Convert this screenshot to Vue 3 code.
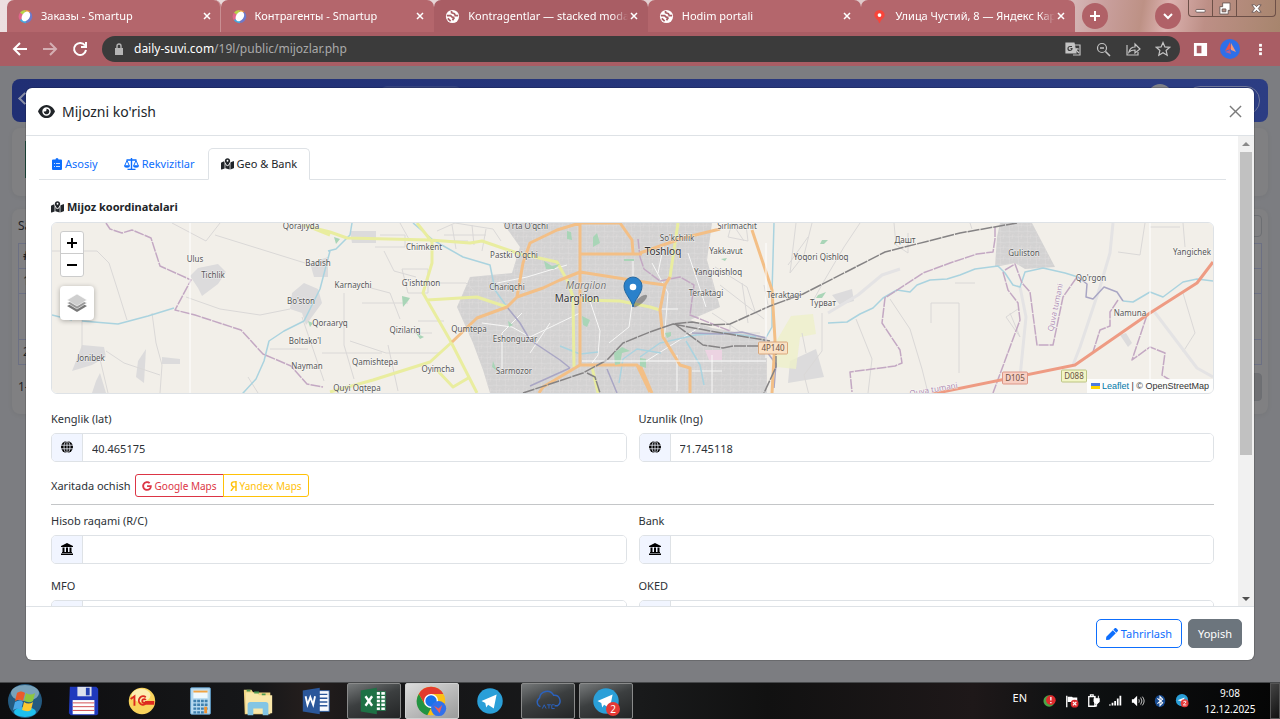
<template>
  <div class="desktop">
    <header class="browser">
      <div class="tab-strip">
        <div class="tabs">
          <div v-for="tab in tabs" :key="tab.title" class="tab" :class="{ current: tab.current }">
            <svg v-if="tab.icon === 'smartup'" class="favicon" viewBox="0 0 16 16">
              <path d="M8 1a7 7 0 0 1 5 2L8 8z" fill="#f3a43c" />
              <path d="M8 1a7 7 0 0 0-6 3l6 4z" fill="#b9d348" />
              <path d="M2 4a7 7 0 0 0 0 8l6-4z" fill="#e2658b" />
              <path d="M2 12a7 7 0 0 0 7 3L8 8z" fill="#45a6dd" />
              <path d="M13 3a7 7 0 0 1-4 12L8 8z" fill="#6e79c9" />
              <ellipse cx="8.3" cy="7.7" rx="4" ry="5.6" fill="#fff" transform="rotate(35 8 8)" />
            </svg>
            <svg v-else-if="tab.icon === 'globe'" class="favicon" viewBox="0 0 16 16">
              <circle cx="8" cy="8" r="7" fill="#fff" />
              <path d="M2 7h4l2 2h2M7 2v2l3 1 1 2h3M8 12l2-3M3 10l3 3" fill="none" stroke="#a95d64" stroke-width="1.800" />
            </svg>
            <svg v-else class="favicon" viewBox="0 0 16 16">
              <path d="M8 1a5.500 5.500 0 0 0-5.500 5.500C2.500 10 7 11 7.500 15h1C9 11 13.500 10 13.500 6.500A5.500 5.500 0 0 0 8 1z" fill="#f8443a" />
              <circle cx="8" cy="6.500" r="2" fill="#fff" />
            </svg>
            <span class="tab-title">{{ tab.title }}</span>
            <button class="tab-close" aria-label="Close tab">
              <svg viewBox="0 0 8 8"><path d="M1 1l6 6M7 1L1 7" /></svg>
            </button>
          </div>
        </div>
        <button class="round-btn new-tab" aria-label="New tab">
          <svg viewBox="0 0 12 12"><path d="M6 1v10M1 6h10" /></svg>
        </button>
        <button class="round-btn tab-search" aria-label="Search tabs">
          <svg viewBox="0 0 12 12"><path d="M2 4l4 4 4-4" /></svg>
        </button>
        <div class="window-controls">
          <button aria-label="Minimize"><svg viewBox="0 0 14 14"><rect x="2" y="8" width="10" height="3" rx="1" /></svg></button>
          <button aria-label="Restore">
            <svg viewBox="0 0 14 14"><path d="M5 1h8v8h-2v4H2V5h3zM4.500 7.500v3h4v-3z" fill-rule="evenodd" /></svg>
          </button>
          <button class="wide" aria-label="Close"><svg viewBox="0 0 14 14"><path d="M2 3h3l2 2 2-2h3L9 7l3 4H9L7 9l-2 2H2l3-4z" /></svg></button>
        </div>
      </div>

      <div class="toolbar">
        <button class="nav-btn" aria-label="Back"><svg viewBox="0 0 16 16"><path d="M15 8H2M8 2L2 8l6 6" /></svg></button>
        <button class="nav-btn faded" aria-label="Forward"><svg viewBox="0 0 16 16"><path d="M1 8h13M8 2l6 6-6 6" /></svg></button>
        <button class="nav-btn" aria-label="Reload">
          <svg viewBox="0 0 16 16"><path d="M13 4.500A6 6 0 1 0 14 9M14 1v5H9" /></svg>
        </button>
        <div class="omnibox">
          <svg class="lock" viewBox="0 0 10 12"><path d="M1 5h8v7H1z" fill="#b5b5b5" /><path d="M3 5V3a2 2 0 0 1 4 0v2" fill="none" stroke="#b5b5b5" stroke-width="1.400" /></svg>
          <span class="url"><b>daily-suvi.com</b>/19l/public/mijozlar.php</span>
          <button aria-label="Translate">
            <svg viewBox="0 0 16 16"><path d="M1 2h8l2 10H1z" fill="#c4c4c4" /><path d="M9 4h6v10H8" /><path d="M10 8h4M12 7c0 2-1 3-2 4M11 9l3 3" /><path d="M7 5.500H5a2 2 0 1 0 2 2H5.500" stroke="#3b3b3b" /></svg>
          </button>
          <button aria-label="Zoom"><svg viewBox="0 0 16 16"><circle cx="7" cy="7" r="4.500" /><path d="M10.500 10.500L15 15M5 7h4" stroke-width="1.600" /></svg></button>
          <button aria-label="Share"><svg viewBox="0 0 16 16"><path d="M2 4v10h11v-3M4 11c1-4 3-5 6-5V3l5 5-5 4V9c-3 0-4 0-6 2z" /></svg></button>
          <button aria-label="Bookmark"><svg viewBox="0 0 16 16"><path d="M8 1.500l1.900 4.400 4.800.4-3.600 3.200 1.100 4.700L8 11.700l-4.200 2.500 1.100-4.700L1.300 6.300l4.800-.4z" /></svg></button>
        </div>
        <button class="chrome-btn" aria-label="Side panel">
          <svg viewBox="0 0 16 16"><path d="M1 1h14v14H1zM4 4v8h5V4z" fill="#fff" fill-rule="evenodd" /></svg>
        </button>
        <button class="chrome-btn profile" aria-label="Profile">
          <svg viewBox="0 0 20 20"><circle cx="10" cy="10" r="10" fill="#2f6fe8" /><path d="M10 3l1 7-6 2z" fill="#e8524e" /><path d="M11 4l5 9-5-2z" fill="#f39b7c" /><path d="M5 13l5-2 1 4z" fill="#b85f8e" /></svg>
        </button>
        <button class="chrome-btn" aria-label="Menu">
          <svg viewBox="0 0 16 16" fill="#fff"><rect x="6.500" y="2" width="3" height="3" /><rect x="6.500" y="6.500" width="3" height="3" /><rect x="6.500" y="11" width="3" height="3" /></svg>
        </button>
      </div>
    </header>

    <main class="viewport">
      <div class="page" aria-hidden="true">
        <div class="navbar">
          <span class="nav-back"></span>
          <span class="nav-search"></span>
          <span class="nav-avatar"></span>
          <span class="nav-pill"></span>
        </div>
        <div class="page-card filter-card"><span class="filter-edge"></span></div>
        <div class="page-card table-card">
          <div class="table-top"><span>Sa</span><span class="ghost-box"></span></div>
          <table class="client-table">
            <thead><tr><th>#</th></tr></thead>
            <tbody>
              <tr><td>1</td></tr>
              <tr class="tall"><td></td></tr>
              <tr><td>2</td></tr>
            </tbody>
          </table>
          <div class="table-bottom"><span>1-</span><span class="ghost-box filled"></span></div>
        </div>
      </div>

      <section class="modal" role="dialog" aria-labelledby="modal-title">
        <div class="modal-header">
          <svg class="title-icon" viewBox="0 0 576 512"><path :d="icons.eye" /></svg>
          <h1 id="modal-title">Mijozni ko'rish</h1>
          <button class="modal-close" aria-label="Close"><svg viewBox="0 0 14 14"><path d="M1 1l12 12M13 1L1 13" /></svg></button>
        </div>

        <div class="modal-middle">
          <div class="modal-body">
            <nav class="nav-tabs">
              <a href="#asosiy">
                <svg class="clip-icon" viewBox="0 0 10 12"><path d="M1 1.500h2.500a1.500 1.500 0 0 1 3 0H9a1 1 0 0 1 1 1V11a1 1 0 0 1-1 1H1a1 1 0 0 1-1-1V2.500a1 1 0 0 1 1-1z" /><path d="M2 5.500h1M4 5.500h4M2 8.500h1M4 8.500h4" stroke="#fff" stroke-width=".8" /></svg>
                Asosiy
              </a>
              <a href="#rekvizitlar">
                <svg class="scale-icon" viewBox="0 0 15 12">
                  <path d="M7.500 0v11M2.500 2h10M3.500 11.500h8" fill="none" stroke="currentColor" stroke-width="1.400" />
                  <path d="M3 2.500L.8 7.500M3 2.500l2.200 5M12 2.500L9.800 7.500M12 2.500l2.200 5" fill="none" stroke="currentColor" />
                  <path d="M0 7.200h6a3 2.500 0 0 1-6 0zM9 7.200h6a3 2.500 0 0 1-6 0z" />
                </svg>
                Rekvizitlar
              </a>
              <a href="#geo" class="active">
                <svg class="map-icon" viewBox="0 0 576 512"><path :d="icons.map" /></svg>
                Geo &amp; Bank
              </a>
            </nav>

            <div class="tab-content">
              <h2>
                <svg class="map-icon" viewBox="0 0 576 512"><path :d="icons.map" /></svg>
                Mijoz koordinatalari
              </h2>

              <div class="map">
                <svg class="map-canvas" viewBox="0 0 1161 170" preserveAspectRatio="xMidYMid slice">
                  <defs>
                    <pattern id="streets" width="9" height="11" patternUnits="userSpaceOnUse">
                      <path d="M0 3l9-1M3 0l1 11M0 8l9 1M7 0l-1 5" fill="none" stroke="#dedddd" stroke-width=".5" />
                    </pattern>
                  </defs>
                  <rect width="1161" height="170" fill="#f2efe9" />
                  <g v-for="area in areas" :key="area">
                    <path :d="area" fill="#d3d2d2" />
                    <path :d="area" fill="url(#streets)" />
                  </g>
                  <path v-for="(p, i) in hamlets" :key="'h' + i" :d="p" fill="#dcdbdc" />
                  <path d="M739 93l22-2 3 20-16 3-4 32-19-2-3-22z" fill="#eef0c9" opacity=".8" />
                  <path d="M653 127h17v10h-13z" fill="#ecd3e2" />
                  <g fill="none" stroke-linejoin="round">
                    <path v-for="(line, i) in lines" :key="i" :d="line.d" :class="line.kind" />
                  </g>
                  <path v-for="(p, i) in parks" :key="'p' + i" :d="p" fill="#a9d5b7" />
                  <path d="M138 0v170M1098 0v170M714 20v115M530 138h184" stroke="#fff" stroke-width="1" />
                  <g class="labels" text-anchor="middle">
                    <text v-for="(l, i) in labels" :key="'l' + i" :x="l[1] - 52" :y="l[2] - 222" :class="l[3]">{{ l[0] }}</text>
                    <text class="district" transform="translate(1006 85) rotate(-78)">Quva tumani</text>
                    <text class="district" transform="translate(882 169) rotate(-10)">Quva tumani</text>
                    <g v-for="s in shields" :key="s.text">
                      <rect :x="s.x - s.w / 2" :y="s.y - 6" :width="s.w" height="12" rx="1" :fill="s.fill" :stroke="s.stroke" />
                      <text :x="s.x" :y="s.y + 3" class="shield">{{ s.text }}</text>
                    </g>
                  </g>
                  <ellipse cx="588" cy="78" rx="9" ry="3" transform="rotate(-40 588 78)" fill="#000" opacity=".3" />
                  <path d="M581 84c-1-7-9-13-9-21a9 9 0 0 1 18 0c0 8-8 14-9 21z" fill="#2a81cb" stroke="#2468a0" />
                  <circle cx="581" cy="64" r="3.300" fill="#fff" />
                </svg>
                <div class="zoom-control">
                  <button aria-label="Zoom in"><svg viewBox="0 0 10 10"><path d="M5 0v10M0 5h10" /></svg></button>
                  <button aria-label="Zoom out"><svg viewBox="0 0 10 10"><path d="M0 5h10" /></svg></button>
                </div>
                <button class="layers-control" aria-label="Layers">
                  <svg viewBox="0 0 20 20">
                    <path d="M0 13l10-5 10 5-10 6z" fill="#777" />
                    <path d="M0 10l10-5 10 5-10 6z" fill="#999" stroke="#fff" stroke-width=".6" />
                    <path d="M0 7l10-6 10 6-10 6z" fill="#cfcfcf" stroke="#fff" stroke-width=".6" />
                  </svg>
                </button>
                <div class="attribution">
                  <svg viewBox="0 0 9 6"><path fill="#4c7be1" d="M0 0h9v3H0z" /><path fill="#ffd500" d="M0 3h9v3H0z" /></svg>
                  <a href="#leaflet">Leaflet</a> | © OpenStreetMap
                </div>
              </div>

              <div class="row">
                <div v-for="f in coords" :key="f.id" class="field">
                  <label :for="f.id">{{ f.label }}</label>
                  <div class="input-group">
                    <span class="addon">
                      <svg viewBox="0 0 12 12">
                        <circle cx="6" cy="6" r="6" />
                        <path d="M0 4.200h12M0 7.800h12M6 0v12" stroke="#f1f5ff" stroke-width=".8" />
                        <ellipse cx="6" cy="6" rx="3" ry="6" fill="none" stroke="#f1f5ff" stroke-width=".8" />
                      </svg>
                    </span>
                    <input :id="f.id" v-model="f.value" type="text" />
                  </div>
                </div>
              </div>

              <div class="open-in">
                <span>Xaritada ochish</span>
                <div class="btn-group">
                  <button class="google"><svg viewBox="0 0 488 512"><path :d="icons.google" /></svg>Google Maps</button>
                  <button class="yandex">
                    <svg viewBox="0 0 8 12"><path d="M7 0v12M7 1H4.500a2.500 2.500 0 0 0 0 6H7M4.500 7L1 12" fill="none" stroke="currentColor" stroke-width="1.700" /></svg>Yandex Maps
                  </button>
                </div>
              </div>

              <hr />

              <div class="row bank-row">
                <div v-for="f in bank" :key="f.id" class="field">
                  <label :for="f.id">{{ f.label }}</label>
                  <div class="input-group">
                    <span class="addon">
                      <svg viewBox="0 0 12 12"><path d="M6 0l6 3v1H0V3zM1.500 4.500h2V9h-2zM5 4.500h2V9H5zM8.500 4.500h2V9h-2zM1 9h10v1H1zM0 10.500h12V12H0z" /></svg>
                    </span>
                    <input :id="f.id" v-model="f.value" type="text" />
                  </div>
                </div>
              </div>
            </div>
          </div>

          <div class="scrollbar">
            <span class="arrow up"></span>
            <div class="track"><div class="thumb"></div></div>
            <span class="arrow down"></span>
          </div>
        </div>

        <div class="modal-footer">
          <button class="btn btn-edit"><svg viewBox="0 0 512 512"><path :d="icons.pen" /></svg>Tahrirlash</button>
          <button class="btn btn-close">Yopish</button>
        </div>
      </section>
    </main>

    <footer class="taskbar">
      <button class="task" aria-label="Start">
        <svg viewBox="0 0 36 36">
          <circle cx="18" cy="18" r="17" fill="#245a80" />
          <ellipse cx="18" cy="10" rx="14" ry="8" fill="#8fb4c8" opacity=".8" />
          <ellipse cx="18" cy="29" rx="11" ry="5" fill="#1fc0ee" />
          <path d="M10 10c3-2 5-2 8 0l-2 8c-3-2-5-1-8 0z" fill="#ea5a2b" />
          <path d="M19 10c3 2 6 2 9 0l-2 8c-3 2-6 1-9 0z" fill="#8cc63f" />
          <path d="M8 19c3-1 5-2 8 0l-2 8c-3-2-5-1-8 0z" fill="#4aa9e9" />
          <path d="M17 19c3 2 6 2 9 0l-2 8c-3 2-6 1-9 0z" fill="#fdc82f" />
        </svg>
      </button>
      <button class="task" aria-label="Total Commander">
        <svg viewBox="0 0 36 36">
          <path d="M3 3h28l2 2v27l-2 1H4l-2-2z" fill="#1f39bd" /><path d="M11 3h15v10H11z" fill="#dce1ec" /><path d="M20 4h4v8h-4z" fill="#2340b0" />
          <path d="M6 17h23v15H6z" fill="#fff" /><path d="M6 20h23M6 24h23M6 28h23" stroke="#d0474b" />
        </svg>
      </button>
      <button class="task" aria-label="1C">
        <svg viewBox="0 0 36 36">
          <circle cx="18" cy="18" r="14" fill="#f9d35c" /><ellipse cx="17" cy="12" rx="10" ry="7" fill="#fdedb0" />
          <path d="M6 16l4-3v10M22 14a4.500 4.500 0 1 0 0 7h9M22 17a2 2 0 1 0 0 2h9" fill="none" stroke="#dd2a1f" stroke-width="2" />
        </svg>
      </button>
      <button class="task" aria-label="Calculator">
        <svg viewBox="0 0 36 36">
          <rect x="8" y="4" width="21" height="28" rx="1" fill="#b7daf0" stroke="#5c9ac6" /><path d="M11 7h15v8H11z" fill="#eef8fd" /><path d="M11 7h15v2H11z" fill="#f0a343" />
          <path d="M11 18h15M11 22h15M11 26h15M11 30h11" stroke="#3f80ae" stroke-width="2.500" stroke-dasharray="3 1" /><path d="M24 24v7" stroke="#ee9130" stroke-width="3" />
        </svg>
      </button>
      <button class="task" aria-label="Explorer">
        <svg viewBox="0 0 36 36">
          <path d="M3 6h8l2 3h18v23H4z" fill="#f0d583" /><path d="M5 9h12l2 3h14v19H5z" fill="#f9e7a9" />
          <path d="M6 7h4M14 9h5M22 11h4" stroke="#4f9a53" stroke-width="2" /><path d="M7 22q0-3 3-3h16q3 0 3 3v11h-6v-7H13v7H7z" fill="#83c5e4" />
        </svg>
      </button>
      <button class="task" aria-label="Word">
        <svg viewBox="0 0 36 36">
          <path d="M17 7h15v22H17z" fill="#f6f9fd" stroke="#2b579a" /><path d="M20 11h10M20 15h10M20 19h10M20 23h10" stroke="#2b579a" stroke-width="1.500" />
          <path d="M4 7l18-3v28L4 29z" fill="#2b579a" /><path d="M7 13l2 9 3-8 3 8 2-9" fill="none" stroke="#fff" stroke-width="2" />
        </svg>
      </button>
      <button class="task open" aria-label="Excel">
        <svg viewBox="0 0 36 36">
          <path d="M18 8h12v20H18z" fill="#fff" stroke="#1e7145" /><path d="M18 12h12M18 16h12M18 20h12M18 24h12M25 8v20" stroke="#1e7145" stroke-width="1.500" />
          <path d="M4 7l17-3v28L4 29z" fill="#1e7145" /><path d="M9 13l7 10M16 13L9 23" stroke="#fff" stroke-width="2.500" />
        </svg>
      </button>
      <button class="task open focused" aria-label="Chrome">
        <svg viewBox="0 0 36 36">
          <circle cx="17" cy="18" r="15" fill="#fbc116" />
          <path d="M4 10.500a15 15 0 0 1 26 0H17l-6.500 11z" fill="#e33b2e" /><path d="M4 10.500L10.500 22 17 25.500 13 33A15 15 0 0 1 4 10.500z" fill="#229342" />
          <circle cx="17" cy="18" r="7.500" fill="#fff" /><circle cx="17" cy="18" r="6" fill="#1a73e8" />
          <circle cx="25" cy="26" r="8" fill="#3270ea" /><path d="M20 23l5 3 4-4-3 9z" fill="#ef5d57" />
        </svg>
      </button>
      <button class="task" aria-label="Telegram">
        <svg viewBox="0 0 36 36"><circle cx="18" cy="18" r="13.500" fill="#2a9fd8" /><path d="M9 18l16-7-3 15-6-4-2 3-1-5z" fill="#fff" /></svg>
      </button>
      <button class="task open" aria-label="ATC">
        <svg viewBox="0 0 36 36">
          <path d="M10 24a5 5 0 0 1-1-9 8 8 0 0 1 15-3 6 6 0 0 1 4 11h-3" fill="none" stroke="#2b62be" stroke-width="1.500" />
          <path d="M12 26l2-4 2 4M17 22h4M19 22v4M25 22h-3v4h3" fill="none" stroke="#2b62be" />
        </svg>
      </button>
      <button class="task open" aria-label="Telegram chats">
        <svg viewBox="0 0 36 36"><circle cx="18" cy="18" r="13.500" fill="#2a9fd8" /><path d="M9 18l16-7-3 15-6-4-2 3-1-5z" fill="#fff" /></svg>
        <span class="badge">2</span>
      </button>

      <div class="tray">
        <span class="lang">EN</span>
        <svg viewBox="0 0 16 16"><circle cx="7" cy="8" r="6.500" fill="#4ba447" /><circle cx="9" cy="7" r="5.500" fill="#e02a2d" /><path d="M9 3.500v4M9 9v1.500" stroke="#fff" stroke-width="1.500" /></svg>
        <svg viewBox="0 0 16 16"><path d="M2 2v13" stroke="#fff" stroke-width="1.500" /><path d="M3 3h5l1 1h5v5H3z" fill="#fff" /><circle cx="11" cy="11" r="4.500" fill="#d9292c" /><path d="M9 9l4 4M13 9l-4 4" stroke="#fff" stroke-width="1.500" /></svg>
        <svg viewBox="0 0 16 16"><path d="M2 3h7v11H2zM4 1h3v2H4z" fill="none" stroke="#fff" stroke-width="1.500" /><path d="M8 5h6v4l-2 2h-2L8 9zM9 2v3M13 2v3M11 11v3H8" fill="#fff" stroke="#fff" /></svg>
        <svg viewBox="0 0 16 16"><path d="M1 13v-1M4 13v-3M7 13V8M10 13V5M13 13V2" stroke="#fff" stroke-width="2" /></svg>
        <svg viewBox="0 0 16 16"><path d="M1 6h2l4-4v12l-4-4H1z" fill="#fff" /><path d="M9 6q1 2 0 4M11 4q3 4 0 8M13 3q4 5 0 10" fill="none" stroke="#ddd" /></svg>
        <svg viewBox="0 0 16 16"><ellipse cx="8" cy="8" rx="6" ry="7" fill="#174b91" /><path d="M5 5l6 5-3 3V3l3 3-6 5" fill="none" stroke="#fff" stroke-width="1.200" /></svg>
        <svg viewBox="0 0 16 16"><circle cx="8" cy="7" r="7" fill="#2a9fd8" /><path d="M3 7l8-3-2 6-3-2z" fill="#fff" /><circle cx="11" cy="10.500" r="4.500" fill="#e53a3a" /><path d="M9.500 9q3-2 3 0 0 1-3 3.500h3.500" fill="none" stroke="#fff" /></svg>
      </div>
      <div class="clock"><span>9:08</span><span>12.12.2025</span></div>
      <button class="show-desktop" aria-label="Show desktop"></button>
    </footer>
  </div>
</template>

<script setup>
import { ref } from 'vue'

const tabs = [
  { title: 'Заказы - Smartup', icon: 'smartup' },
  { title: 'Контрагенты - Smartup', icon: 'smartup' },
  { title: 'Kontragentlar — stacked moda', icon: 'globe', current: true },
  { title: 'Hodim portali', icon: 'globe' },
  { title: 'Улица Чустий, 8 — Яндекс Кар', icon: 'pin' }
]

const coords = ref([
  { id: 'lat', label: 'Kenglik (lat)', value: '40.465175' },
  { id: 'lng', label: 'Uzunlik (lng)', value: '71.745118' }
])

const bank = ref([
  { id: 'account', label: 'Hisob raqami (R/C)', value: '' },
  { id: 'bank', label: 'Bank', value: '' },
  { id: 'mfo', label: 'MFO', value: '' },
  { id: 'oked', label: 'OKED', value: '' }
])

const icons = {
  eye: 'M288 32c-80.8 0-145.500 36.800-192.600 80.600C48.600 156 17.300 208 2.500 243.700c-3.300 7.900-3.300 16.700 0 24.600C17.300 304 48.600 356 95.400 399.400C142.500 443.200 207.200 480 288 480s145.500-36.800 192.600-80.600c46.800-43.500 78.100-95.400 93-131.100c3.300-7.900 3.300-16.700 0-24.600c-14.900-35.700-46.200-87.700-93-131.100C433.500 68.800 368.800 32 288 32zM144 256a144 144 0 1 1 288 0 144 144 0 1 1 -288 0zm144-64c0 35.300-28.700 64-64 64c-7.100 0-13.900-1.200-20.300-3.300c-5.500-1.800-11.900 1.600-11.700 7.400c.3 6.900 1.300 13.800 3.200 20.700c13.700 51.200 66.400 81.600 117.600 67.900s81.600-66.400 67.900-117.600c-11.100-41.500-47.800-69.400-88.600-71.100c-5.800-.2-9.200 6.100-7.400 11.700c2.100 6.400 3.300 13.200 3.300 20.300z',
  map: 'M408 120c0 54.600-73.100 151.900-105.200 192c-7.700 9.600-22 9.600-29.600 0C241.100 271.900 168 174.600 168 120C168 53.700 221.700 0 288 0s120 53.700 120 120zm8 80.400c3.500-6.900 6.700-13.800 9.600-20.600c.5-1.200 1-2.500 1.500-3.700l116-46.400C558.900 123.400 576 135 576 152V422.800c0 9.800-6 18.600-15.100 22.300L416 503V200.400zM137.600 138.300c2.400 14.100 7.200 28.300 12.800 41.500c2.900 6.800 6.100 13.700 9.600 20.600V451.800L32.900 502.700C17.100 509 0 497.400 0 480.400V209.600c0-9.800 6-18.600 15.100-22.300l122.600-49zM327.800 332c13.900-17.400 35.700-45.700 56.200-77V504.300L192 449.400V255c20.500 31.300 42.300 59.600 56.200 77c20.500 25.600 59.100 25.600 79.600 0zM288 152a40 40 0 1 0 0-80 40 40 0 1 0 0 80z',
  google: 'M488 261.800C488 403.300 391.100 504 248 504 110.800 504 0 393.200 0 256S110.800 8 248 8c66.800 0 123 24.500 166.300 64.900l-67.500 64.900C258.500 52.600 94.300 116.600 94.300 256c0 86.500 69.100 156.600 153.700 156.600 98.200 0 135-70.400 140.800-106.900H248v-85.300h236.100c2.300 12.700 3.900 24.900 3.900 41.400z',
  pen: 'M290.700 93.200l128 128-278 278-114.100 12.600C11.300 513.500-1.600 500.600.1 485.300l12.700-114.200 277.900-277.900zm207.200-19l-60.100-60.100c-18.700-18.800-49.100-18.800-67.900 0l-56.500 56.500 128 128 56.500-56.500c18.800-18.800 18.800-49.200 0-67.900z'
}

// built-up areas
const areas = [
  'M451 0h209l-5 37 13 47-30 13 22 8 55 9v56H438l-7-23-10-27-16-36 13-30 42-4 8-26z',
  'M948 0h32l23 44-30 2-10-6-20 4 2-30z'
]

const hamlets = [
  'M146 45l20-4 8 8-8 12-16 12-4-8-8-12z',
  'M258 40l18-6v20h-14z',
  'M240 70l12-10 14 6 4 14-16 22-4-12-12-4z',
  'M30 122l22 2 2 10-14 8-20 6 4-10z',
  'M86 138l8-12-2 34-8-6z',
  'M110 134l18 2v5h-18z',
  'M44 158l4-8 6 20h-14z',
  'M298 8h26v12h-24z',
  'M738 138l26-12 8 28-36 6z',
  'M780 72l20-6 2 12-14 4zM1068 112l6-2 6 10-4 4z'
]

const parks = [
  'M515 8l4 1 1 8-5-1z',
  'M492 38l8 5 8-2-6 5h-8z',
  'M350 73l8 2-2 3-5 6z',
  'M364 110l8 4-4 2z',
  'M570 124l-8 6 1 12 5-1 2-11 8-2z',
  'M541 14l4-4 3 10-7 4z',
  'M770 17h6l-4 4h-4zM766 72l8-3-4 6h-6z',
  'M530 93l8 4-3 7-4-2z',
  'M572 36h10v2h-10zM456 98l5 4-4 2z',
  'M441 138l4 10-5-4zM588 135l6 1v9l-6-2z',
  'M613 110l6-1v4l-4 2zM669 36l6-1-2 3z',
  'M282 14l6 2-4 5zM256 98l5 2-3 4z'
]

const lines = [
  { kind: 'faint', d: 'M0 28h45l12 12 8 25 10 32M120 0l34 18 14-18M163 12l90 28M134 74l34 12 40 6 30-6M100 90l4 30 6 22-2 28M30 97v36M54 128l18 12 36 12M48 136l8 34M196 154l10 16M218 126h38M250 94l22 64' },
  { kind: 'faint', d: 'M328 12h25v12h-30M332 28l10 20 22 6M300 60l38 10 10 26M348 0l10 18M298 118l36 12h54M292 70v52l10 34M310 80h46M336 122l10 46M350 110h30M366 98h26M270 130h60' },
  { kind: 'faint', d: 'M385 8l18-8 38 6 8 12M392 12h42M386 18h30M400 2l4 24M420 2l2 20M434 6l-4 22M350 46h26v24h-20zM384 60h30l10 10' },
  { kind: 'faint', d: 'M663 44l32 20 8 24M668 62l44 34M660 90l30 20M680 0l-4 14 20 4-2-16M684 6l8 12M744 0l-6 50 14-18 8-32M756 14l-20 28M792 24l-20 34-10 18M808 0l-16 24M842 0l2 22 12 8v-20M678 102v8h30M690 60l6 40' },
  { kind: 'faint', d: 'M716 82l-4-20M750 110l4 20M770 90v38l-18 24 10 40M804 96l16 40-4 34M838 76l20 30 12 40 6 24M879 100v-20h28v70M903 60h20M918 0l2 6M1093 0l-5 32-22-3M1131 0l2 24M1098 4h30M1131 70l12 40-12 19M958 90l10 24-14-20 12-8' },
  { kind: 'wide', d: 'M1061 0l-3 30-10 34-20 60-7 18M968 64l6 30-6 60M1101 87l44 58 16 9M776 90l30-18 24-20 18-6' },
  { kind: 'street', d: 'M445 60l30-6 40-12M430 100l30 4 18 10 50-24M450 110v40M478 130l20-30M538 78l10 30-2 24-6 8M581 36v38l-4 30-20 16M600 40l16 30-4 50M608 86h18M612 20l-6 30M636 30l18 54M625 132v36M660 132v38M588 142l60-38M640 148h30M470 90l-20 20' },
  { kind: 'river', d: 'M361 0l20 17 30 17 27 8 5 25 12 17' },
  { kind: 'river', d: 'M300 0l-2 12-14 14-8 2M278 28l-10 38-16 32-20 10-15 10-5 20-8 18-24 26' },
  { kind: 'river', d: 'M0 92l20 5M30 98l36 3 30-8 26-8M722 0l-2 70v34l-8 14M776 100l19-1 13-8 13-6 10-10 14-8 13 2 7-7 13-5 17-1 13-4 15-6 23-3 7 7 8 12 7 2 5-15 18-4 22 5 13 4M1071 78l10 1 17-10 13 5 20-15 14-3 16 2' },
  { kind: 'river', d: 'M567 160l4-24 14-10 24 4M588 134l20-14 36-8 30-2 30 4M508 123l20 8 18-2M634 118l14 24 4 20' },
  { kind: 'canal', d: 'M455 84l13 16 10 17 30 20 10 8M518 145l-40 18M1026 54l9 7-1 13 7 2 11-12 13 5 6 9M640 110l30 1 20-2 24 6-2 10 12 16-2 24M555 146l10 24' },
  { kind: 'border', d: 'M54 0l4 6 12 4 10-3 19 8 9 28 31 14-16 30 20 5 46 15 22 24 28 12 16 18 16 3' },
  { kind: 'border', d: 'M588 34l4 12 16 12 20-4 14 8-4 30 40 16M586 16l2 18' },
  { kind: 'border', d: 'M943 4v12l-2 13-16 2-27 9-27 10-38 25-3 25 18 27 2 13-7 3-45 6 2 20' },
  { kind: 'border', d: 'M951 49l5 18 10 13 2 17-27 73M953 47l10-6 7 19 8 9 7 53h16l10-48 14-20M1066 77l-8 12v14l-10 4-7 22M1095 92l-15 45 18-13 15 6-3 22 8 5' },
  { kind: 'yellow', d: 'M250 2l28 7 17 6 83 2 40 3 12-2 35 12 40 9 11 20 5 15 1 70M365 0l15 19v21l-9 30 27 47 27 53M375 77l50-3 30 10M400 119l-22 20-57 18-43 12M385 147l16 17 17-10M528 77l40 1 30 6 10 3M626 0l-8 54M278 12l-20-8M540 144l6 26' },
  { kind: 'orange', d: 'M528 0v142l-37 22-4 6M528 49l-20 8-17 8-26 9-10 10-30 11-25 24M465 74l6-34 7-20 27-13 23-7h40l12 17 1 13M528 31h62M528 49l70 11 15 2M588 30l43-15 37-9M618 54l-5 8-5 25 3 27 17 28 10 3v25M528 142h57l13 27M588 142l12 28M700 7l20 60 3 50-3 53' },
  { kind: 'road-red', d: 'M880 171l143-29 75-52 47-30 16-21' },
  { kind: 'rail', d: 'M471 170l60-20 24-13 16-17 27-11 23-8 19-2 18 3 20-1 40-18 33-12 82-42 75-19 57-10' },
  { kind: 'rail', d: 'M621 101l37 7 30 5 30 5M624 102l27 20 20 3 10-2h36M535 150l8 4 5 16M724 120v24l-12 26' }
]

const labels = [
  ['Qorajiyda', 301, 228], ['Ulus', 195, 261], ['Tichlik', 213, 277], ['Badish', 318, 265],
  ["Bo'ston", 301, 303], ['Qoraaryq', 330, 325], ["Boltako'l", 305, 343], ['Nayman', 307, 368],
  ['Jonibek', 91, 360], ['Karnaychi', 353, 287], ['Chimkent', 424, 249], ["G'ishtmon", 421, 285],
  ['Qizilariq', 405, 332], ['Qumtepa', 469, 331], ['Qamishtepa', 375, 364], ['Oyimcha', 438, 371],
  ['Quyi Oqtepa', 357, 390], ["O'rta O'qchi", 526, 228], ["Pastki O'qchi", 514, 257], ['Chariqchi', 507, 289],
  ['Eshonguzar', 515, 341], ['Sarmozor', 514, 373], ['Margilon', 586, 288, 'city italic'], ["Marg'ilon", 577, 301, 'city'],
  ["So'kchilik", 677, 240], ['Toshloq', 663, 254, 'city'], ['Sirlimachit', 737, 228], ['Yakkavut', 726, 253],
  ['Yangiqishloq', 718, 274], ['Teraktagi', 706, 295], ['Teraktagi', 784, 297], ['Yoqori Qishloq', 821, 259],
  ['Дашт', 905, 242], ['Турват', 823, 305], ['Guliston', 1024, 255], ["Qo'rgon", 1091, 280],
  ['Namuna', 1130, 315], ['Yangichek', 1192, 254]
]

const shields = [
  { text: '4P140', x: 721, y: 125, w: 29, fill: '#fbe1c4', stroke: '#d9a77c' },
  { text: 'D105', x: 963, y: 155, w: 25, fill: '#f8cfc3', stroke: '#dd9687' },
  { text: 'D088', x: 1022, y: 153, w: 25, fill: '#f2f5c6', stroke: '#bcc482' }
]
</script>

<style scoped>
.desktop {
  display: flex;
  flex-direction: column;
  height: 100vh;
  overflow: hidden;
  color: #212529;
  font-family: "Noto Sans", "Open Sans", sans-serif;
  font-size: 11px;
  line-height: 18px;
}

button {
  margin: 0;
  padding: 0;
  border: none;
  background: none;
  color: inherit;
  font: inherit;
}

a {
  text-decoration: none;
}

.browser {
  flex: none;
  color: #fff;
}

.tab-strip {
  display: flex;
  height: 32px;
  padding-left: 7px;
  background: linear-gradient(100deg, #ecdfe0 0%, #ddc5c6 82%, #c99f9d 86%, #bd9185 89%, #dcb2b0 91%, #bd8f86 94%, #a7856d 100%);
}

.tabs {
  display: flex;
  flex: 0 1 1068px;
  min-width: 0;
}

.tab {
  display: flex;
  flex: 1;
  align-items: center;
  gap: 8px;
  min-width: 0;
  padding: 0 10px 0 11px;
  border-radius: 7px 7px 0 0;
  background: #b4666c;
}

.tab.current {
  background: #a95d64;
}

.tab:first-child {
  box-shadow: inset -1px 0 #c98f93;
}

.favicon {
  flex: none;
  width: 15px;
  height: 15px;
}

.tab-title {
  flex: 1;
  margin-right: -6px;
  overflow: hidden;
  white-space: nowrap;
  mask-image: linear-gradient(90deg, #000 90%, transparent);
}

.tab-close {
  display: flex;
}

.tab-close svg {
  width: 8px;
  height: 8px;
  stroke: #fff;
  stroke-width: 1.5;
}

.round-btn {
  display: flex;
  flex: none;
  align-items: center;
  justify-content: center;
  align-self: center;
  width: 26px;
  height: 26px;
  border-radius: 50%;
  background: #b06167;
}

.round-btn svg {
  width: 12px;
  height: 12px;
  fill: none;
  stroke: #fff;
  stroke-width: 2;
}

.new-tab {
  margin-left: 7px;
}

.tab-search {
  margin-left: auto;
}

.window-controls {
  display: flex;
  align-self: flex-start;
  height: 16px;
  margin: 0 4px 0 7px;
  border: 1px solid #6d5048;
  border-top: none;
  border-radius: 0 0 4px 4px;
  overflow: hidden;
}

.window-controls button {
  display: flex;
  align-items: center;
  justify-content: center;
  width: 24px;
  border-right: 1px solid #6d5048;
}

.window-controls .wide {
  width: 38px;
  border-right: none;
}

.window-controls svg {
  width: 13px;
  height: 13px;
  fill: #fff;
  stroke: #6b5a58;
  stroke-width: 1;
}

.toolbar {
  display: flex;
  align-items: center;
  height: 34px;
  padding: 0 12px;
  background: #a95d64;
}

.nav-btn {
  display: flex;
  width: 30px;
}

.nav-btn svg {
  width: 16px;
  height: 16px;
  fill: none;
  stroke: #fff;
  stroke-width: 2;
}

.faded {
  opacity: 0.5;
}

.omnibox {
  display: flex;
  flex: 1;
  align-items: center;
  gap: 14px;
  height: 26px;
  margin-right: 12px;
  padding: 0 9px 0 12px;
  border-radius: 13px;
  background: #3b3b3b;
}

.omnibox button {
  display: flex;
}

.omnibox button svg {
  width: 16px;
  height: 16px;
  fill: none;
  stroke: #c4c4c4;
  stroke-width: 1.2;
}

.lock {
  width: 10px;
  height: 12px;
}

.url {
  flex: 1;
  margin-left: -4px;
  color: #aaa;
  font-size: 12px;
}

.url b {
  color: #fff;
  font-weight: 400;
}

.chrome-btn {
  display: flex;
  justify-content: center;
  width: 16px;
  margin-right: 12px;
}

.chrome-btn:last-child {
  margin-right: 0;
}

.chrome-btn svg {
  width: 15px;
  height: 15px;
}

.profile {
  width: 20px;
}

.profile svg {
  width: 20px;
  height: 20px;
}

.viewport {
  display: grid;
  flex: 1;
  min-height: 0;
  background: #7c7d81;
}

.page,
.modal {
  grid-area: 1 / 1;
}

.page {
  padding: 13px 12px 0;
}

.navbar {
  display: flex;
  align-items: flex-start;
  height: 43px;
  padding: 0 8px;
  border-radius: 8px;
  background: linear-gradient(90deg, #202f74, #2c3d83);
}

.nav-back {
  width: 7px;
  height: 7px;
  margin-top: 15px;
  border-left: 2px solid #8b90a5;
  border-bottom: 2px solid #8b90a5;
  transform: rotate(45deg);
}

.nav-search {
  width: 80px;
  height: 28px;
  margin: 7px auto 0 352px;
  border-radius: 6px;
  background: #35447f;
}

.nav-avatar {
  width: 24px;
  height: 24px;
  margin: 5px 14px 0 0;
  border-radius: 50%;
  background: #7f8187;
}

.nav-pill {
  width: 72px;
  height: 27px;
  margin-top: 7px;
  border: 1px solid #6f7799;
  border-radius: 14px;
}

.page-card {
  border-radius: 8px;
  background: #808082;
  box-shadow: 0 1px 5px rgba(0, 0, 0, 0.06);
}

.filter-card {
  display: flex;
  height: 68px;
  margin-top: 6px;
}

.filter-edge {
  width: 20px;
  height: 37px;
  margin: 13px 0 0 13px;
  border-left: 1px solid #1d4b3c;
}

.table-card {
  margin-top: 13px;
  padding: 6px;
}

.table-top,
.table-bottom {
  display: flex;
  align-items: center;
  justify-content: space-between;
  height: 22px;
  color: #222326;
  font-size: 12px;
}

.table-top {
  margin-bottom: 6px;
}

.table-bottom {
  height: 43px;
}

.ghost-box {
  width: 50px;
  height: 20px;
  border: 1px solid #6d6f73;
  border-radius: 4px;
}

.ghost-box.filled {
  height: 26px;
  background: #6f7073;
}

.client-table {
  width: 100%;
  border-collapse: collapse;
  font-size: 12px;
}

.client-table th,
.client-table td {
  height: 24px;
  padding: 0 4px;
  border: 1px solid #6c7083;
  text-align: left;
}

.client-table .tall td {
  height: 45px;
}

.modal {
  display: flex;
  flex-direction: column;
  margin: 22px 26px;
  min-height: 0;
  border-radius: 6px;
  background: #fff;
  overflow: hidden;
  box-shadow: 0 0 0 1px rgba(0, 0, 0, 0.15);
}

.modal-header {
  display: flex;
  flex: none;
  align-items: center;
  gap: 7px;
  height: 47px;
  padding: 0 12px;
  border-bottom: 1px solid #dee2e6;
}

.title-icon {
  width: 17px;
  height: 15px;
  fill: #212529;
}

h1 {
  flex: 1;
  margin: 0;
  font-size: 14px;
  font-weight: 400;
}

.modal-close {
  display: flex;
}

.modal-close svg {
  width: 13px;
  height: 13px;
  stroke: #7b7b7b;
  stroke-width: 1.5;
}

.modal-middle {
  display: flex;
  flex: 1;
  min-height: 0;
}

.modal-body {
  flex: 1;
  min-width: 0;
  padding: 12px 12px 0 13px;
  overflow: hidden;
}

.nav-tabs {
  display: flex;
  border-bottom: 1px solid #dee2e6;
}

.nav-tabs a {
  display: flex;
  align-items: center;
  gap: 3px;
  height: 30px;
  margin-bottom: -1px;
  padding: 0 12px;
  border: 1px solid transparent;
  border-radius: 5px 5px 0 0;
  color: #0d6efd;
}

.nav-tabs .active {
  border-color: #dee2e6 #dee2e6 #fff;
  background: #fff;
  color: #212529;
}

.nav-tabs svg,
h2 svg {
  flex: none;
  height: 12px;
  fill: currentColor;
}

.clip-icon {
  width: 10px;
}

.scale-icon {
  width: 15px;
}

.map-icon {
  width: 13px;
}

.tab-content {
  padding: 18px 12px 0;
}

h2 {
  display: flex;
  align-items: center;
  gap: 3px;
  margin: 0 0 6px;
  font-size: 11px;
  font-weight: 700;
}

.map {
  position: relative;
  height: 170px;
  border: 1px solid #dee2e6;
  border-radius: 6px;
  overflow: hidden;
}

.map-canvas {
  display: block;
  width: 100%;
  height: 100%;
}

.faint {
  stroke: #dad8d7;
  stroke-width: 1;
}

.wide {
  stroke: #e4e3e4;
  stroke-width: 3;
}

.street {
  stroke: #f7f7f6;
  stroke-width: 1;
}

.river {
  stroke: #aad3df;
  stroke-width: 1.5;
}

.canal {
  stroke: #a9a6c4;
  stroke-width: 1.5;
}

.border {
  stroke: #c3a8c3;
  stroke-width: 1.5;
  stroke-dasharray: 10 1;
}

.yellow {
  stroke: #e9ed9f;
  stroke-width: 3;
}

.orange {
  stroke: #f3bf86;
  stroke-width: 3;
}

.road-red {
  stroke: #ee9b83;
  stroke-width: 3;
}

.rail {
  stroke: #858384;
  stroke-width: 1.5;
  stroke-dasharray: 12 1;
}

.labels text {
  fill: #555;
  font-size: 8px;
  paint-order: stroke;
  stroke: rgba(255, 255, 255, 0.6);
  stroke-width: 1px;
}

.labels .city {
  fill: #333;
  font-size: 10px;
}

.labels .italic {
  fill: #777;
  font-style: italic;
}

.labels .district {
  fill: #b08fb4;
}

.labels .shield {
  fill: #6b5145;
  stroke: none;
}

.zoom-control,
.layers-control {
  position: absolute;
  left: 8px;
  background: #fff;
}

.zoom-control {
  top: 8px;
  border: 1px solid #ccc;
  border-radius: 3px;
}

.zoom-control button {
  display: flex;
  align-items: center;
  justify-content: center;
  width: 22px;
  height: 22px;
}

.zoom-control button:first-child {
  border-bottom: 1px solid #ccc;
}

.zoom-control svg {
  width: 10px;
  height: 10px;
  stroke: #000;
  stroke-width: 2;
}

.layers-control {
  display: flex;
  align-items: center;
  justify-content: center;
  top: 63px;
  width: 34px;
  height: 34px;
  border-radius: 4px;
  box-shadow: 0 1px 5px rgba(0, 0, 0, 0.3);
}

.layers-control svg {
  width: 20px;
  height: 20px;
}

.attribution {
  position: absolute;
  right: 0;
  bottom: 0;
  padding: 0 4px;
  background: rgba(255, 255, 255, 0.85);
  color: #333;
  font-family: "Liberation Sans", Arial, sans-serif;
  font-size: 9px;
  line-height: 14px;
}

.attribution svg {
  width: 9px;
  height: 6px;
  margin-right: 2px;
}

.attribution a {
  color: #0078a8;
}

.row {
  display: grid;
  grid-template-columns: 1fr 1fr;
  gap: 13px 12px;
  margin-top: 16px;
}

.bank-row {
  margin-top: 0;
}

.field label {
  display: block;
  margin-bottom: 5px;
}

.input-group {
  display: flex;
  height: 27px;
  border: 1px solid #dee2e6;
  border-radius: 5px;
  overflow: hidden;
}

.addon {
  display: flex;
  flex: none;
  justify-content: center;
  width: 30px;
  padding-top: 7px;
  border-right: 1px solid #dee2e6;
  background: #f1f5ff;
}

.addon svg {
  width: 12px;
  height: 12px;
}

input {
  flex: 1;
  min-width: 0;
  padding: 2px 9px 0;
  border: none;
  outline: none;
  font: inherit;
}

.field label,
.open-in span,
input {
  color: #2c3136;
}

.open-in {
  display: flex;
  align-items: center;
  gap: 4px;
  margin-top: 12px;
}

.btn-group {
  display: flex;
}

.btn-group button {
  display: flex;
  align-items: center;
  gap: 3px;
  height: 23px;
  padding: 0 6px;
  border: 1px solid;
  border-radius: 3px 0 0 3px;
  font-size: 10px;
}

.btn-group svg {
  width: 10px;
  height: 10px;
  fill: currentColor;
}

.btn-group .google {
  color: #dc3545;
}

.btn-group .yandex {
  margin-left: -1px;
  border-radius: 0 3px 3px 0;
  color: #ffc107;
}

.btn-group .yandex svg {
  width: 7px;
}

hr {
  margin: 7px 0;
  border: none;
  border-top: 1px solid #c4c6c8;
}

.scrollbar {
  display: flex;
  flex: none;
  flex-direction: column;
  align-items: center;
  width: 16px;
  padding: 5px 0;
  background: #f1f1f1;
}

.arrow {
  border: 4px solid transparent;
}

.up {
  margin-bottom: 2px;
  border-top: none;
  border-bottom: 4px solid #8a8a8a;
  padding-top: 1px;
}

.down {
  border-bottom: none;
  border-top: 4px solid #505050;
}

.track {
  flex: 1;
  align-self: stretch;
  padding: 4px 2px 6px;
}

.thumb {
  height: 69%;
  background: #c1c1c1;
}

.modal-footer {
  display: flex;
  flex: none;
  align-items: center;
  justify-content: flex-end;
  gap: 6px;
  height: 53px;
  padding: 0 12px;
  border-top: 1px solid #dee2e6;
}

.btn {
  display: flex;
  align-items: center;
  gap: 3px;
  height: 29px;
  padding: 0 9px;
  border: 1px solid;
  border-radius: 5px;
}

.btn svg {
  width: 12px;
  height: 12px;
  fill: currentColor;
}

.btn-edit {
  border-color: #0d6efd;
  color: #0d6efd;
}

.btn-close {
  border-color: #6c757d;
  background: #6c757d;
  color: #fff;
}

.taskbar {
  display: flex;
  flex: none;
  align-items: center;
  height: 36px;
  border-top: 1px solid #46484a;
  background: linear-gradient(90deg, #0d0d0f, #161719 20%, #241e1d 24%, #151517 30%, #191a1b 50%, #111 60%, #1e1819 76%, #0e1112 84%, #050505);
  color: #fff;
}

.task {
  position: relative;
  display: flex;
  flex: none;
  align-items: center;
  justify-content: center;
  width: 54px;
  height: 36px;
  margin-right: 4px;
  border-radius: 2px;
}

.task:first-child {
  width: 50px;
  margin-right: 7px;
}

.task:first-child svg {
  width: 36px;
  height: 36px;
}

.task svg {
  width: 34px;
  height: 34px;
}

.task.open {
  border: 1px solid #8a8b8b;
  background: linear-gradient(160deg, #76797a, #3c3f40 45%, #232526);
  box-sizing: border-box;
}

.task.focused {
  border-color: #d0d1d1;
  background: linear-gradient(150deg, #dcdcdc, #9a9b9b);
}

.badge {
  position: absolute;
  right: 12px;
  bottom: 2px;
  width: 14px;
  height: 14px;
  border-radius: 50%;
  background: #e53935;
  font-size: 10px;
  line-height: 14px;
  text-align: center;
}

.tray {
  display: flex;
  align-items: center;
  gap: 8px;
  margin-left: auto;
}

.tray svg {
  display: block;
  width: 14px;
  height: 14px;
}

.tray svg:last-child {
  margin-right: 1px;
}

.lang {
  margin: 0 8px 6px 0;
}

.clock {
  display: flex;
  flex-direction: column;
  align-items: center;
  width: 80px;
  font-size: 10px;
  line-height: 16px;
}

.show-desktop {
  width: 10px;
  height: 36px;
  border: 1px solid #555;
  background: linear-gradient(135deg, #444, #111);
}
</style>

<style>
body {
  margin: 0;
}
</style>
